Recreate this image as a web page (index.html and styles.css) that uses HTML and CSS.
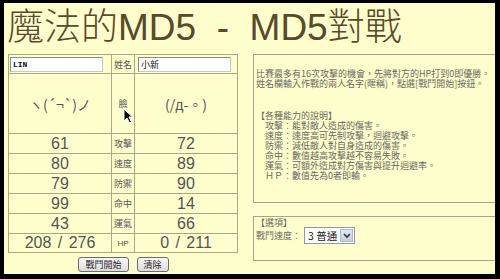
FILE: index.html
```html
<!DOCTYPE html>
<html lang="zh-Hant">
<head>
<meta charset="utf-8">
<title>魔法的MD5 - MD5對戰</title>
<link rel="stylesheet" href="styles.css">
</head>
<body>
<div class="frame">
  <h1 class="title">魔法的MD5  -  MD5對戰</h1>
  <div class="main">
    <div class="left">
      <table class="battle">
        <colgroup><col class="c-side"><col class="c-mid"><col class="c-side"></colgroup>
        <tr class="r-name">
          <td><span class="name mono">LIN</span></td>
          <td class="lbl">姓名</td>
          <td class="right-in"><span class="name">小新</span></td>
        </tr>
        <tr class="r-face">
          <td class="face">ヽ(´¬`)ノ</td>
          <td class="lbl face-lbl">臉<svg class="cursor" width="10" height="16" viewBox="0 0 10 16"><path d="M1 1 L1 13 L4 10 L6.5 15 L8.5 14 L6 9 L9.5 9 Z" fill="#000" stroke="#fff" stroke-width="1"/></svg></td>
          <td class="face">(/д-。)</td>
        </tr>
        <tr><td class="num">61</td><td class="lbl">攻擊</td><td class="num">72</td></tr>
        <tr><td class="num">80</td><td class="lbl">速度</td><td class="num">89</td></tr>
        <tr><td class="num">79</td><td class="lbl">防禦</td><td class="num">90</td></tr>
        <tr><td class="num">99</td><td class="lbl">命中</td><td class="num">14</td></tr>
        <tr><td class="num">43</td><td class="lbl">運氣</td><td class="num">66</td></tr>
        <tr class="r-hp"><td class="num">208 / 276</td><td class="lbl lat">HP</td><td class="num">0 / 211</td></tr>
      </table>
      <div class="buttons">
        <button class="btn">戰鬥開始</button>
        <button class="btn">清除</button>
      </div>
    </div>
    <div class="right">
      <div class="box info">
        <p class="para">比賽最多有16次攻擊的機會，先將對方的HP打到0即優勝。<br>姓名欄輸入作戰的兩人名字(暱稱)，點選[戰鬥開始]按鈕。</p>
        <p class="para list">【各種能力的說明】<br>　攻擊：能對敵人造成的傷害。<br>　速度：速度高可先制攻擊，迴避攻擊。<br>　防禦：減低敵人對自身造成的傷害。<br>　命中：數值越高攻擊越不容易失敗。<br>　運氣：可額外造成對方傷害與提升迴避率。<br>　ＨＰ：數值先為0者即輸。</p>
      </div>
      <div class="box opts">
        <div class="opt-title">【選項】</div>
        <div class="opt-row">
          <span class="opt-label">戰鬥速度：</span>
          <span class="select"><span class="sel-text">3 普通</span><span class="sel-arrow"><svg width="8" height="6" viewBox="0 0 8 6"><path d="M1 1 L4 4 L7 1" fill="none" stroke="#334" stroke-width="1.6"/></svg></span></span>
        </div>
      </div>
    </div>
  </div>
</div>
</body>
</html>
```

FILE: styles.css
```css
html, body {
  margin: 0;
  padding: 0;
  background: #000;
}
body {
  font-family: "Noto Sans CJK TC", "Liberation Sans", sans-serif;
  width: 500px;
  height: 279px;
  overflow: hidden;
}
.frame {
  margin: 3px 5px 0 4px;
  width: 491px;
  height: 271px;
  background: #fefecd;
  overflow: hidden;
}
.title {
  margin: 0;
  padding: 2px 0 0 3px;
  font-family: "Liberation Sans", "Noto Sans CJK TC", sans-serif;
  font-size: 37px;
  font-weight: 300;
  line-height: 46px;
  height: 51px;
  box-sizing: border-box;
  color: #5a4a2c;
  white-space: pre;
}
.main {
  display: flex;
  gap: 15px;
}
.left {
  margin-left: 4px;
  width: 230px;
}
.battle {
  border-collapse: collapse;
  width: 230px;
  table-layout: fixed;
  border: 1px solid #aaa785;
}
.battle td {
  border: 1px solid #aaa785;
  padding: 0;
  text-align: center;
  height: 19px;
  color: #555;
}
.c-side { width: 103px; }
.c-mid { width: 23px; }
.r-name td { height: 18px; text-align: left; }
.r-name td.lbl { text-align: center; }
.r-face td { height: 59px; }
.r-hp td { height: 18px; }
.name {
  display: block;
  margin-left: 1px;
  width: 89px;
  height: 13px;
  background: #fff;
  border: 1px solid #8c8c8c;
  border-bottom-color: #c8c8c8;
  border-right-color: #c8c8c8;
  font-size: 9px;
  line-height: 13px;
  padding-left: 2px;
  color: #111;
}
.right-in .name { margin-left: 3px; }
.mono {
  font-family: "Liberation Mono", monospace;
  font-weight: bold;
  font-size: 8px;
}
.lbl {
  font-size: 9px;
  color: #7a7a70;
}
.lat { font-family: "Liberation Sans", sans-serif; font-size: 8px; }
.face-lbl { position: relative; }
.cursor {
  position: absolute;
  left: 11px;
  top: 34px;
}
.face {
  font-size: 14px;
  color: #555;
}
.num {
  font-family: "Liberation Sans", sans-serif;
  font-size: 16px;
  line-height: 18px;
  color: #555;
  word-spacing: 2px;
}
.buttons {
  display: flex;
  justify-content: center;
  gap: 8px;
  margin-top: 4px;
  padding-left: 1px;
}
.btn {
  font-family: "Noto Sans CJK TC", sans-serif;
  font-size: 9px;
  line-height: 11px;
  height: 15px;
  padding: 0 6px;
  margin: 0;
  border: 1px solid #6b6b6b;
  border-radius: 3px;
  background: linear-gradient(#fafafa, #dcdcdc);
  color: #222;
}
.right {
  width: 245px;
  flex: none;
}
.box {
  border: 1px solid #a5a492;
  border-right: none;
  color: #6a6a62;
  font-size: 9px;
}
.info {
  height: 149px;
  padding: 14px 0 0 2px;
  box-sizing: border-box;
}
.para {
  margin: 0;
  line-height: 10px;
  white-space: nowrap;
}
.list {
  margin-top: 22px;
  line-height: 10px;
}
.opts {
  margin-top: 13px;
  height: 45px;
  padding: 0 0 0 2px;
  box-sizing: border-box;
}
.opt-title { line-height: 11px; }
.opt-row {
  display: flex;
  align-items: center;
  margin-top: -1px;
}
.opt-label { width: 48px; }
.select {
  display: flex;
  align-items: stretch;
  width: 51px;
  height: 17px;
  box-sizing: border-box;
  background: #fff;
  border: 1px solid #8a9ab0;
  white-space: nowrap;
}
.sel-text {
  flex: 1;
  font-size: 10.5px;
  line-height: 15px;
  color: #222;
  padding-left: 3px;
  white-space: nowrap;
}
.sel-arrow {
  width: 11px;
  margin: 1px;
  background: linear-gradient(#e4e8f4, #c6cde0);
  border: 1px solid #b0b8cc;
  display: flex;
  align-items: center;
  justify-content: center;
}
```
